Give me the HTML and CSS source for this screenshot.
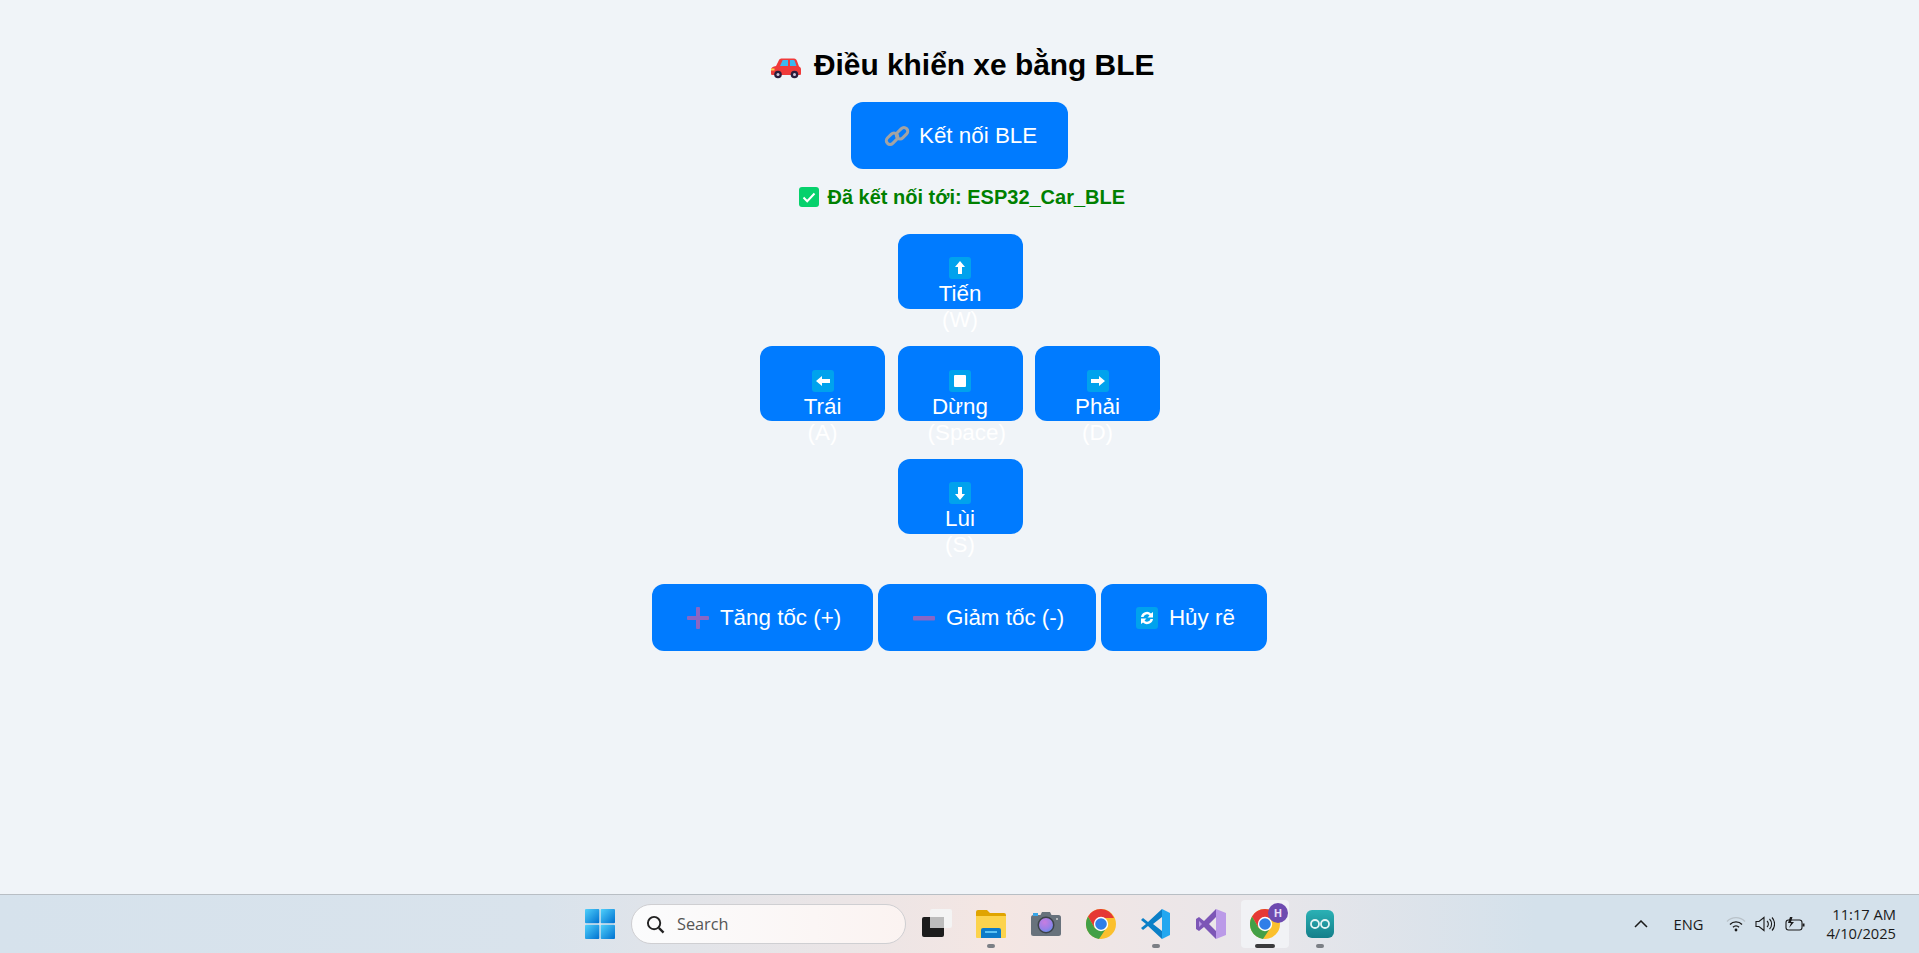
FILE: index.html
```html
<!DOCTYPE html>
<html lang="vi">
<head>
<meta charset="utf-8">
<title>Điều khiển xe bằng BLE</title>
<link rel="stylesheet" href="styles.css">
</head>
<body>
<svg class="defs" width="0" height="0" aria-hidden="true">
  <defs>
    <symbol id="key" viewBox="0 0 22 22"><rect width="22" height="22" rx="3" fill="#00a2ed"/></symbol>
    <linearGradient id="win" x1="0" y1="0" x2="1" y2="1"><stop offset="0" stop-color="#4fd0fb"/><stop offset="1" stop-color="#0071d0"/></linearGradient>
    <radialGradient id="lens" cx="0.4" cy="0.3" r="0.8"><stop offset="0" stop-color="#c77de0"/><stop offset="0.6" stop-color="#9a80e8"/><stop offset="1" stop-color="#5f8fe8"/></radialGradient>
    <symbol id="chrome" viewBox="0 0 30 30">
      <circle cx="15" cy="15" r="15" fill="#fbc02d"/>
      <path d="M15 0A15 15 0 0 0 2 7.500L8.500 18.700 15 9H28A15 15 0 0 0 15 0Z" fill="#e53935"/>
      <path d="M2 7.500A15 15 0 0 0 13 29.900L19 21 8.500 18.700Z" fill="#43a047"/>
      <circle cx="15" cy="15" r="7.200" fill="#fff"/>
      <circle cx="15" cy="15" r="5.800" fill="#2f7ee8"/>
    </symbol>
  </defs>
</svg>

<main class="page">
  <h1 class="title"><svg class="emo-big" viewBox="0 0 32 24"><path d="M1 14.500c0-2 2-3 5-3.500l3-6c.5-1 1.500-1.500 3-1.500h12c1.500 0 2.500 1 3 2.500l2 5.500c1.500.5 2 1.500 2 3v4c0 1-.5 1.500-1.500 1.500h-27C1.500 20 1 19.500 1 18.500Z" fill="#f03a3a"/><path d="M10 11l2.500-5.500c.2-.4.5-.5 1-.5H18v6Z" fill="#3bb8ef"/><path d="M20 5h3.500c.6 0 1 .3 1.200.8L26.500 11H20Z" fill="#3bb8ef"/><rect x="1" y="13.500" width="3.500" height="2" fill="#ffd54a"/><circle cx="8" cy="19.500" r="3.800" fill="#2b1d3c"/><circle cx="8" cy="19.500" r="1.500" fill="#cfc7dc"/><circle cx="24.500" cy="19.500" r="3.800" fill="#2b1d3c"/><circle cx="24.500" cy="19.500" r="1.500" fill="#cfc7dc"/></svg> Điều khiển xe bằng BLE</h1>

  <button class="btn wide"><svg class="emo" viewBox="-5 0 32 22"><g fill="none" stroke="#a3a3a3" stroke-width="3"><rect x="-0.500" y="10" width="13" height="7.500" rx="3.700" transform="rotate(-45 6 13.700)"/><rect x="9.500" y="4.500" width="13" height="7.500" rx="3.700" transform="rotate(-45 16 8.200)"/></g></svg> Kết nối BLE</button>

  <p class="status"><svg class="emo-check" viewBox="0 0 20 20"><rect width="20" height="20" rx="3" fill="#06d16c"/><path d="M4.500 10.500l3.700 3.700 7.300-7.700" fill="none" stroke="#fff" stroke-width="2"/></svg> Đã kết nối tới: ESP32_Car_BLE</p>

  <div class="pad">
    <button class="btn dir up"><svg class="emo" viewBox="-5 0 32 22"><use href="#key" width="22" height="22"/><path d="M11 4l5 6h-3v7h-4v-7H6Z" fill="#fff"/></svg> Tiến (W)</button>
    <button class="btn dir left"><svg class="emo" viewBox="-5 0 32 22"><use href="#key" width="22" height="22"/><path d="M4 11l6-5v3h8v4h-8v3Z" fill="#fff"/></svg> Trái (A)</button>
    <button class="btn dir stop"><svg class="emo" viewBox="-5 0 32 22"><use href="#key" width="22" height="22"/><rect x="5" y="5" width="12" height="12" rx="1" fill="#fff"/></svg> Dừng (Space)</button>
    <button class="btn dir right"><svg class="emo" viewBox="-5 0 32 22"><use href="#key" width="22" height="22"/><path d="M18 11l-6-5v3H4v4h8v3Z" fill="#fff"/></svg> Phải (D)</button>
    <button class="btn dir down"><svg class="emo" viewBox="-5 0 32 22"><use href="#key" width="22" height="22"/><path d="M11 18l5-6h-3V5H9v7H6Z" fill="#fff"/></svg> Lùi (S)</button>
  </div>

  <div class="actions">
    <button class="btn"><svg class="emo" viewBox="-5 0 32 22"><path d="M9 1a1 1 0 0 1 1-1h2a1 1 0 0 1 1 1v8h8a1 1 0 0 1 1 1v2a1 1 0 0 1-1 1h-8v8a1 1 0 0 1-1 1h-2a1 1 0 0 1-1-1v-8H1a1 1 0 0 1-1-1v-2a1 1 0 0 1 1-1h8Z" fill="#8a66c4"/></svg> Tăng tốc (+)</button>
    <button class="btn"><svg class="emo" viewBox="-5 0 32 22"><rect y="9" width="22" height="4.500" rx="1" fill="#8a66c4"/></svg> Giảm tốc (-)</button>
    <button class="btn"><svg class="emo" viewBox="-5 0 32 22"><use href="#key" width="22" height="22"/><path d="M5 10a6 6 0 0 1 10-3.500L17 5v5.500h-5.500l2-2a3.500 3.500 0 0 0-6 1.500ZM17 12a6 6 0 0 1-10 3.500L5 17v-5.500h5.500l-2 2a3.500 3.500 0 0 0 6-1.500Z" fill="#fff"/></svg> Hủy rẽ</button>
  </div>
</main>

<footer class="taskbar">
  <div class="task-center">
    <svg class="start" viewBox="0 0 30 30"><rect width="14.300" height="14.300" rx="1" fill="url(#win)"/><rect x="15.700" width="14.300" height="14.300" rx="1" fill="url(#win)"/><rect y="15.700" width="14.300" height="14.300" rx="1" fill="url(#win)"/><rect x="15.700" y="15.700" width="14.300" height="14.300" rx="1" fill="url(#win)"/></svg>
    <div class="search">
      <svg class="search-icon" viewBox="0 0 20 20"><circle cx="8.500" cy="8.500" r="6.500" fill="none" stroke="#222" stroke-width="2"/><path d="M13.500 13.500L18.500 18.500" stroke="#222" stroke-width="2.400"/></svg>
      <span>Search</span>
    </div>
    <div class="apps">
      <div class="app"><svg viewBox="0 0 30 30"><rect x="0" y="8" width="22" height="20" rx="2" fill="#1c1c1c"/><rect x="8" y="0" width="22" height="19" rx="2" fill="#f4f4f4"/><rect x="8" y="8" width="14" height="11" fill="#bcbcbc"/></svg></div>
      <div class="app open"><svg viewBox="0 0 30 30"><path d="M0 3a2 2 0 0 1 2-2h9l3 3h14a2 2 0 0 1 2 2v4H0Z" fill="#e0a400"/><path d="M0 7h30v21a1 1 0 0 1-1 1H1a1 1 0 0 1-1-1Z" fill="#fcd34d"/><path d="M5 21a2 2 0 0 1 2-2h16a2 2 0 0 1 2 2v8H5Z" fill="#0d7ac9"/><rect x="9" y="22" width="12" height="2" fill="#5cc2f4"/></svg></div>
      <div class="app"><svg viewBox="0 0 30 30"><rect y="6" width="30" height="21" rx="2.500" fill="#68727c"/><path d="M9 7l2-4h8l2 4Z" fill="#68727c"/><rect x="2" y="4" width="5" height="3" fill="#38a5e8"/><circle cx="15" cy="16" r="8.500" fill="#3d4349"/><circle cx="15" cy="16" r="7" fill="url(#lens)"/><circle cx="26" cy="10" r="1" fill="#d0d0d0"/></svg></div>
      <div class="app"><svg viewBox="0 0 30 30"><use href="#chrome"/></svg></div>
      <div class="app open"><svg viewBox="0 0 30 30"><path d="M21 0L29 4V26L21 30Z" fill="#22a7f0"/><path d="M21 0V8L12 15 21 22V30L7 17 2 21 0 19 5 15 0 11 2 9 7 13Z" fill="#0b7fc7"/></svg></div>
      <div class="app"><svg viewBox="0 0 30 30"><path d="M20 0L30 4V26L20 30Z" fill="#bb9ae8"/><path d="M20 0V8L13 15 20 22V30L8 18 3 22 0 20V10L3 8 8 12Z" fill="#7c56b6"/><path d="M3 12V18L6 15Z" fill="#bb9ae8"/></svg></div>
      <div class="app active"><svg viewBox="0 0 30 30"><use href="#chrome"/></svg><span class="badge">H</span></div>
      <div class="app open"><svg viewBox="0 0 30 30"><defs><linearGradient id="ard" x1="0" y1="0" x2="0" y2="1"><stop offset="0" stop-color="#2bb1b5"/><stop offset="1" stop-color="#147f8a"/></linearGradient></defs><rect x="1" y="1" width="28" height="28" rx="6" fill="url(#ard)"/><g fill="none" stroke="#e3f4f4" stroke-width="1.800"><circle cx="10" cy="15" r="4"/><circle cx="20" cy="15" r="4"/></g></svg></div>
    </div>
  </div>
  <div class="tray">
    <svg class="chev" viewBox="0 0 14 8"><path d="M1 7l6-6 6 6" fill="none" stroke="#1a1a1a" stroke-width="1.500"/></svg>
    <span class="lang">ENG</span>
    <svg class="tray-i wifi" viewBox="0 0 20 16"><path d="M1 5.500a12.500 12.500 0 0 1 18 0" fill="none" stroke="#b9c2c9" stroke-width="1.300"/><path d="M4 8.500a8 8 0 0 1 12 0M7 11.300a4 4 0 0 1 6 0" fill="none" stroke="#1a1a1a" stroke-width="1.300"/><circle cx="10" cy="14" r="1.400" fill="#1a1a1a"/></svg>
    <svg class="tray-i vol" viewBox="0 0 20 16"><path d="M1 5.500h3l5-4v13l-5-4H1Z" fill="none" stroke="#1a1a1a" stroke-width="1.100"/><path d="M12 5a4 4 0 0 1 0 6M14.500 3a7 7 0 0 1 0 10M17 1.500a9.500 9.500 0 0 1 0 13" fill="none" stroke="#1a1a1a" stroke-width="1.100"/></svg>
    <svg class="tray-i bat" viewBox="0 0 20 16"><rect x="1" y="4" width="16" height="10" rx="2.500" fill="none" stroke="#1a1a1a" stroke-width="1.100"/><rect x="17.500" y="7.500" width="2" height="3" fill="#1a1a1a"/><path d="M5 1L3 7h3l-2 5 5-6H6l1.500-5Z" fill="#1a1a1a"/></svg>
    <div class="clock"><div>11:17 AM</div><div>4/10/2025</div></div>
  </div>
</footer>
</body>
</html>
```

FILE: styles.css
```css
* { box-sizing: border-box; }
html, body { height: 100%; }
body {
  margin: 0;
  display: flex;
  flex-direction: column;
  background: #f0f4f8;
  font-family: "Liberation Sans", Arial, sans-serif;
  overflow: hidden;
}
.defs { position: absolute; }

.page {
  flex: 1;
  display: flex;
  flex-direction: column;
  align-items: center;
  padding-top: 47px;
}
.title {
  margin: 0 0 19px;
  font-size: 29.900px;
  line-height: 36px;
  font-weight: bold;
  color: #000;
  white-space: nowrap;
}
.emo-big { width: 32px; height: 24px; vertical-align: -4px; margin: 0 4px 0 5px; }

.btn {
  border: 0;
  border-radius: 12px;
  background: #007bff;
  color: #fff;
  font-family: inherit;
  font-size: 22.400px;
  padding: 20px 30px;
  line-height: 25px;
}
.emo { width: 32px; height: 22px; vertical-align: -4px; }
.wide { height: 67px; padding: 0 31px 0 30px; }

.status {
  margin: 16px 0 0;
  font-size: 20px;
  line-height: 24px;
  font-weight: bold;
  color: #008000;
}
.emo-check { width: 20px; height: 20px; vertical-align: -3px; margin: 0 3px 0 5px; }

.pad {
  margin: 24.600px 0 0 1px;
  display: grid;
  grid-template-columns: repeat(3, 125px);
  grid-template-rows: repeat(3, 75px);
  column-gap: 12.500px;
  row-gap: 37.500px;
}
.dir {
  width: 125px;
  height: 75px;
  display: block;
  padding: 21.500px 30px 0;
  overflow: visible;
  text-align: center;
}
.btn.dir { line-height: 26px; }
.up { grid-area: 1 / 2; }
.left { grid-area: 2 / 1; }
.stop { grid-area: 2 / 2; }
.right { grid-area: 2 / 3; }
.down { grid-area: 3 / 2; }

.actions {
  margin-top: 50.400px;
  display: flex;
  gap: 4.500px;
}
.actions .btn { height: 67px; padding: 0 32px 0 30px; white-space: nowrap; }

.taskbar {
  flex: none;
  height: 59px;
  display: flex;
  align-items: center;
  padding-left: 585px;
  border-top: 1px solid #b8bec4;
  background: linear-gradient(90deg, #d6e2ec 0%, #d9e3ec 28%, #f4e6e3 52%, #e8e6ea 66%, #d4e1eb 80%, #d4e1eb 100%);
}
.task-center { display: flex; align-items: center; }
.start { width: 30px; height: 30px; }
.search {
  margin-left: 16px;
  width: 275px;
  height: 40px;
  border-radius: 20px;
  display: flex;
  align-items: center;
  gap: 12px;
  padding-left: 14px;
  background: linear-gradient(90deg, #fbfcfd, #fbf3f1);
  border: 1px solid #cfcfd2;
  font-family: "Open Sans", sans-serif;
  font-size: 16.300px;
  color: #555;
}
.search-icon { width: 19px; height: 19px; }
.apps { margin-left: 3.300px; display: flex; align-items: center; }
.app {
  position: relative;
  width: 54.800px;
  height: 48px;
  display: flex;
  align-items: center;
  justify-content: center;
}
.app svg { width: 30px; height: 30px; }
.app.open::after {
  content: "";
  position: absolute;
  left: 50%;
  bottom: 0;
  width: 8px;
  height: 4px;
  margin-left: -4px;
  border-radius: 2px;
  background: #7b7f85;
}
.app.active::before {
  content: "";
  position: absolute;
  left: 3.400px;
  right: 3.400px;
  top: 0;
  bottom: 0;
  border-radius: 4px;
  background: #f1f2f5;
}
.app.active svg { position: relative; }
.app.active::after {
  content: "";
  position: absolute;
  left: 50%;
  bottom: 0;
  width: 20px;
  height: 4px;
  margin-left: -10px;
  border-radius: 2px;
  background: #3a3a3c;
}
.badge {
  position: absolute;
  top: 3px;
  right: 5px;
  width: 20px;
  height: 20px;
  border-radius: 50%;
  background: #6e4bb0;
  color: #e8dcf7;
  font-family: "Open Sans", sans-serif;
  font-weight: 700;
  font-size: 11px;
  line-height: 20px;
  text-align: center;
}
.tray {
  margin-left: auto;
  display: flex;
  align-items: center;
  padding-right: 23px;
  font-family: "Open Sans", sans-serif;
  color: #1a1a1a;
}
.chev { width: 14px; height: 8px; margin-right: 26px; }
.lang { font-size: 14.700px; margin-right: 23px; }
.tray-i { width: 20px; height: 16px; margin-right: 10px; }
.wifi { margin-right: 9px; }
.clock { margin-left: 11px; text-align: right; font-size: 14.700px; line-height: 19px; }
```
